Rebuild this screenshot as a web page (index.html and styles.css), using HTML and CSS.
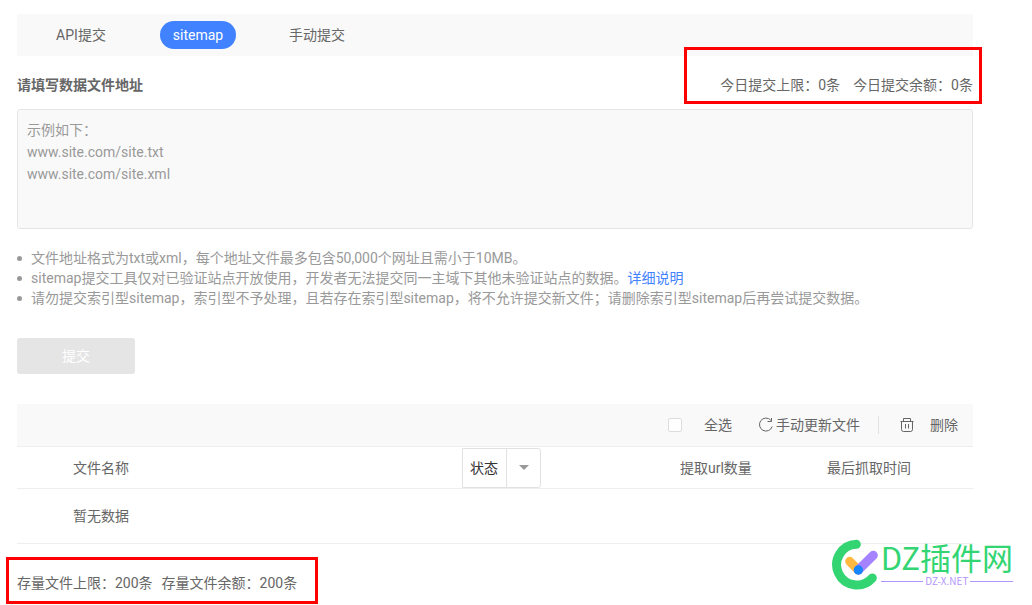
FILE: index.html
```html
<!DOCTYPE html>
<html lang="zh-CN">
<head>
<meta charset="utf-8">
<title>sitemap提交</title>
<link rel="stylesheet" href="styles.css">
</head>
<body>
<main class="page">
  <nav class="tabs">
    <button type="button" class="tab">API提交</button>
    <button type="button" class="tab tab-active">sitemap</button>
    <button type="button" class="tab">手动提交</button>
  </nav>

  <form class="form">
    <div class="form-head">
      <label class="form-label" for="urls">请填写数据文件地址</label>
      <p class="quota quota-today"><span>今日提交上限：0条</span><span>今日提交余额：0条</span></p>
    </div>
    <textarea id="urls" class="urls" placeholder="示例如下：
www.site.com/site.txt
www.site.com/site.xml"></textarea>
    <ul class="tips">
      <li>文件地址格式为txt或xml，每个地址文件最多包含50,000个网址且需小于10MB。</li>
      <li>sitemap提交工具仅对已验证站点开放使用，开发者无法提交同一主域下其他未验证站点的数据。<a class="link" href="#">详细说明</a></li>
      <li>请勿提交索引型sitemap，索引型不予处理，且若存在索引型sitemap，将不允许提交新文件；请删除索引型sitemap后再尝试提交数据。</li>
    </ul>
    <button type="button" class="submit">提交</button>
  </form>

  <section class="files">
    <div class="toolbar">
      <label class="select-all"><input type="checkbox" class="check">全选</label>
      <button type="button" class="tool refresh">
        <svg width="16" height="16" viewBox="0 0 16 16" fill="none" stroke="currentColor" stroke-width="1"><path d="M12.8 3.2A6.5 6.5 0 1 0 14.2 9.5M13.5 1V4.5H9.5"/></svg>手动更新文件
      </button>
      <span class="divider"></span>
      <button type="button" class="tool delete">
        <svg width="14" height="16" viewBox="0 0 14 16" fill="none" stroke="currentColor" stroke-width="1"><path d="M0.5 4.5H13.5M3.5 4.5V1.5H10.5V4.5M1.5 4.5V12.5Q1.5 14.5 3.5 14.5H10.5Q12.5 14.5 12.5 12.5V4.5M5.5 7V11.5M8.5 7V11.5"/></svg>删除
      </button>
    </div>
    <table class="table">
      <thead>
        <tr>
          <th class="col-name">文件名称</th>
          <th class="col-status">
            <div class="dropdown">
              <select class="dropdown-select" aria-label="状态"><option>状态</option></select>
              <span class="dropdown-arrow"></span>
            </div>
          </th>
          <th class="col-count">提取url数量</th>
          <th class="col-time">最后抓取时间</th>
        </tr>
      </thead>
      <tbody>
        <tr><td class="col-name" colspan="4">暂无数据</td></tr>
      </tbody>
    </table>
  </section>

  <p class="quota quota-stock"><span>存量文件上限：200条</span><span>存量文件余额：200条</span></p>
</main>

<div class="brand">
  <svg width="52" height="54" viewBox="30 24 156 162" fill="none" stroke-linecap="round" stroke-width="27">
    <path stroke="#33d573" d="M112 43A61 61 0 1 0 160 144"/>
    <path stroke="#ffb840" d="M92 94L118 120"/>
    <path stroke="#a582ff" d="M163 76L118 120"/>
    <circle cx="118" cy="120" r="14" fill="#1684fc"/>
  </svg>
  <div class="brand-text">
    <span class="brand-name">DZ插件网</span>
    <span class="brand-site">DZ-X.NET</span>
  </div>
</div>
</body>
</html>
```
FILE: styles.css
```css
* {
  box-sizing: border-box;
}

body {
  margin: 0;
  background: #fff;
  color: #666;
  font: 14px/20px Roboto, "Noto Sans CJK SC", sans-serif;
}

button,
select,
textarea {
  font: inherit;
  color: inherit;
}

button {
  border: 0;
  padding: 0;
  background: none;
  cursor: pointer;
}

.page {
  padding: 14px 59px 12px 17px;
}

.tabs {
  display: flex;
  align-items: center;
  gap: 41px;
  height: 42px;
  padding-left: 26px;
  background: #f9f9f9;
}

.tab {
  height: 28px;
  min-width: 76px;
  padding: 0 12px;
  border-radius: 14px;
  white-space: nowrap;
}

.tab-active {
  background: #4082ff;
  color: #fff;
}

.form-head {
  display: flex;
  justify-content: space-between;
  align-items: center;
  height: 53px;
  padding-top: 4px;
}

.form-label {
  font-weight: bold;
}

.quota {
  position: relative;
  display: flex;
  margin: 0;
}

.quota::after {
  content: "";
  position: absolute;
  border: 3px solid #f00;
  pointer-events: none;
}

.quota-today {
  gap: 13px;
}

.quota-today::after {
  inset: -28px -9px -9px -36px;
}

.urls {
  display: block;
  width: 100%;
  height: 120px;
  padding: 9px;
  border: 1px solid #e5e5e5;
  border-radius: 3px;
  background: #f9f9f9;
  line-height: 22px;
  resize: none;
}

.urls::placeholder {
  color: #999;
}

.tips {
  margin: 19px 0 30px;
  padding: 0;
  list-style: none;
  color: #999;
}

.tips li {
  display: flex;
  align-items: center;
}

.tips li::before {
  content: "";
  flex: none;
  width: 5px;
  height: 5px;
  margin-right: 9px;
  border-radius: 50%;
  background: #999;
}

.link {
  color: #4082ff;
  text-decoration: none;
}

.submit {
  display: block;
  width: 118px;
  height: 36px;
  border-radius: 3px;
  background: #e5e5e5;
  color: #fff;
}

.files {
  margin-top: 30px;
}

.toolbar {
  display: flex;
  justify-content: flex-end;
  align-items: center;
  height: 43px;
  padding-right: 15px;
  border-bottom: 1px solid #eee;
  background: #f9f9f9;
}

.select-all,
.tool {
  display: flex;
  align-items: center;
}

.select-all {
  gap: 22px;
  margin-right: 26px;
}

.check {
  appearance: none;
  width: 14px;
  height: 14px;
  margin: 0;
  border: 1px solid #ddd;
  border-radius: 2px;
  background: #fff;
}

.refresh {
  gap: 2px;
}

.divider {
  width: 1px;
  height: 18px;
  margin: 0 21px 0 18px;
  background: #e2e2e2;
}

.delete {
  gap: 16px;
}

.table {
  width: 100%;
  table-layout: fixed;
  border-collapse: separate;
  border-spacing: 0;
}

.table th,
.table td {
  padding: 0;
  border-bottom: 1px solid #eee;
  font-weight: normal;
  text-align: left;
}

.table th {
  height: 42px;
}

.table td {
  height: 55px;
}

.table .col-name {
  padding-left: 56px;
}

th.col-name {
  width: 445px;
}

.col-status {
  width: 218px;
}

.col-count {
  width: 147px;
}

.dropdown {
  display: grid;
  grid-template-columns: 44px 35px;
  width: 79px;
  height: 40px;
}

.dropdown-select {
  grid-area: 1 / 1 / 2 / 3;
  appearance: none;
  padding: 0 7px;
  border: 1px solid #e2e2e2;
  border-radius: 0 3px 3px 0;
  background: #fff;
  color: #333;
}

.dropdown-arrow {
  grid-area: 1 / 2;
  display: flex;
  align-items: center;
  justify-content: center;
  border-left: 1px solid #e2e2e2;
  pointer-events: none;
}

.dropdown-arrow::before {
  content: "";
  border: 5px solid transparent;
  border-top-color: #999;
  border-bottom: 0;
}

.quota-stock {
  gap: 9px;
  width: max-content;
  margin-top: 29px;
}

.quota-stock::after {
  inset: -16px -21px -11px -11px;
}

.brand {
  position: absolute;
  right: 19px;
  top: 538px;
  display: flex;
}

.brand-text {
  display: flex;
  flex-direction: column;
}

.brand-name {
  color: #33d573;
  font: 31px/37px "Noto Sans CJK SC", sans-serif;
  white-space: nowrap;
}

.brand-site {
  display: flex;
  align-items: center;
  gap: 2px;
  color: #b296ff;
  font: 10px/12px "Noto Sans CJK SC", sans-serif;
}

.brand-site::before,
.brand-site::after {
  content: "";
  flex: 1;
  height: 1px;
  background: currentColor;
}
```
